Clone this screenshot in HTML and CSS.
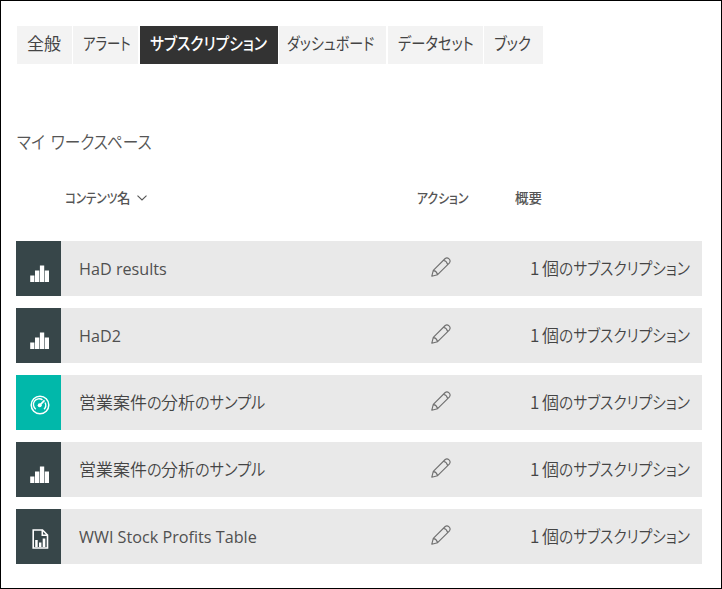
FILE: index.html
```html
<!DOCTYPE html>
<html lang="ja">
<head>
<meta charset="utf-8">
<title>サブスクリプション</title>
<link rel="stylesheet" href="styles.css">
</head>
<body>
<svg class="defs" aria-hidden="true">
  <symbol id="bars" viewBox="0 0 20 17"><path d="M.2 10.5h4.2V17H.2zM5 5.5h4.3V17H5zM9.9.5h4.3V17H9.9zM14.8 5.5H19V17h-4.2z" fill="#fff"/></symbol>
  <symbol id="gauge" viewBox="0 0 20 20"><g fill="none" stroke="#fff"><circle cx="10" cy="10" r="8.8" stroke-width="1.5"/><path d="M5.8 14.2A5.7 5.7 0 0 1 12.5 4.9M15 7.5a5.7 5.7 0 0 1-.9 6.7" stroke-width="1.4"/><path d="M10 10l4.5-4.7" stroke-width="1.8"/></g><circle cx="9.7" cy="10.3" r="2" fill="#fff"/></symbol>
  <symbol id="report" viewBox="0 0 17 20"><path d="M1.2 1h9.3l5 5v13H1.2zM10.3 1v5.2h5.2" fill="none" stroke="#fff" stroke-width="1.6"/><path d="M3.2 11h2.5v7H3.2zM7 13.5h2.4V18H7zM10.7 9.5h2.6V18h-2.6z" fill="#fff"/></symbol>
  <symbol id="pencil" viewBox="0 0 20 20"><path d="M.8 19.2l1.5-5.8L14.2 1.5q1.9-1.4 3.8.4t.5 3.9L6.6 17.7zM2.3 13.4q3.3.8 4.3 4.3M12.4 3.3q3.3.8 4.3 4.3" fill="none" stroke="#707070" stroke-width="1.15" stroke-linejoin="round"/></symbol>
</svg>
<main class="page">
  <nav class="tabs">
    <a class="tab general">全般</a>
    <a class="tab alerts"><span class="kana">アラート</span></a>
    <a class="tab subscriptions active"><span class="kana">サブスクリプション</span></a>
    <a class="tab dashboards"><span class="kana">ダッシュボード</span></a>
    <a class="tab datasets"><span class="kana">データセット</span></a>
    <a class="tab books"><span class="kana">ブック</span></a>
  </nav>
  <h1><span class="kana">マイ ワークスペース</span></h1>
  <div class="head">
    <div class="sort"><span class="kana content-name">コンテンツ</span>名<svg class="chevron" viewBox="0 0 10 6"><path d="M.5.6L5 5 9.5.6" fill="none" stroke="#555" stroke-width="1.1"/></svg></div>
    <div class="action"><span class="kana">アクション</span></div>
    <div>概要</div>
  </div>
  <section class="list">
    <article class="row"><div class="tile"><svg class="i-bars"><use href="#bars"/></svg></div><div class="name latin">HaD results</div><svg class="pencil"><use href="#pencil"/></svg><div class="summary"><span class="one">1</span>個<span class="kana">のサブスクリプション</span></div></article>
    <article class="row"><div class="tile"><svg class="i-bars"><use href="#bars"/></svg></div><div class="name latin">HaD2</div><svg class="pencil"><use href="#pencil"/></svg><div class="summary"><span class="one">1</span>個<span class="kana">のサブスクリプション</span></div></article>
    <article class="row"><div class="tile teal"><svg class="i-gauge"><use href="#gauge"/></svg></div><div class="name">営業案件<span class="kana no">の</span>分析<span class="kana">のサンプル</span></div><svg class="pencil"><use href="#pencil"/></svg><div class="summary"><span class="one">1</span>個<span class="kana">のサブスクリプション</span></div></article>
    <article class="row"><div class="tile"><svg class="i-bars"><use href="#bars"/></svg></div><div class="name">営業案件<span class="kana no">の</span>分析<span class="kana">のサンプル</span></div><svg class="pencil"><use href="#pencil"/></svg><div class="summary"><span class="one">1</span>個<span class="kana">のサブスクリプション</span></div></article>
    <article class="row"><div class="tile"><svg class="i-report"><use href="#report"/></svg></div><div class="name latin">WWI Stock Profits Table</div><svg class="pencil"><use href="#pencil"/></svg><div class="summary"><span class="one">1</span>個<span class="kana">のサブスクリプション</span></div></article>
  </section>
</main>
</body>
</html>
```
FILE: styles.css
```css
* { box-sizing: border-box; }
body { margin: 0; background: #fff; color: #444; font-family: "Noto Sans CJK JP", sans-serif; font-size: 17px; }
.defs { display: block; width: 0; height: 0; }
.page { --condense: .85; width: 722px; height: 589px; border: 1px solid #000; padding: 25px 19px 0 15px; overflow: hidden; }
.kana { display: inline-block; white-space: pre; transform: scaleX(var(--condense)); transform-origin: 0 50%; font-feature-settings: "palt"; }
.tabs { display: grid; grid-template-columns: 55px 65px 138px 107px 95px 59px; gap: 1.4px; height: 38px; margin-left: 1px; }
.tab { background: #f3f3f3; padding-left: 10px; line-height: 34px; white-space: nowrap; overflow: hidden; }
.tab.active { background: #333; color: #fff; font-weight: 500; }
.alerts { --condense: .79; }
.subscriptions { --condense: .87; }
.dashboards { --condense: .825; padding-left: 8px; }
.datasets { --condense: .84; }
h1 { --condense: .87; margin: 63px 0 0 1px; height: 28px; font-size: 18px; line-height: 28px; font-weight: 350; color: #555; word-spacing: 3px; }
.head { display: grid; grid-template-columns: 352px 98px 1fr; margin: 32px 0 0 49px; height: 22px; font-size: 13.5px; line-height: 20px; font-weight: 500; color: #555; }
.sort { display: flex; align-items: center; height: 20px; }
.action { --condense: .88; }
.content-name { width: 52px; }
.chevron { width: 10px; height: 6px; margin: 2px 0 0 6px; }
.list { display: grid; gap: 12px; margin-top: 32px; }
.row { display: grid; grid-template-columns: 45px 370px 98px minmax(0, 1fr); width: 686px; height: 55px; background: #e9e9e9; align-items: center; white-space: nowrap; font-weight: 350; color: #444; }
.tile { height: 55px; background: #374649; display: grid; justify-items: center; padding-top: 24px; }
.teal { background: #01b8aa; }
.i-bars { width: 20px; height: 17px; margin-left: 2px; }
.i-gauge { width: 20px; height: 20px; margin: -4px 0 0 2px; }
.i-report { width: 17px; height: 20px; margin: -4px 0 0 3px; }
.name { --condense: .895; padding-left: 18px; display: flex; line-height: 24px; padding-bottom: 2px; }
.latin { font-family: "Open Sans", sans-serif; font-size: 16.2px; font-weight: 400; color: #505050; padding-bottom: 0; }
.no { width: 14px; }
.pencil { width: 20px; height: 20px; margin: 0 0 3px; }
.summary { --condense: .868; display: flex; line-height: 24px; padding: 0 0 2px 1px; }
.summary > * { flex: none; }
.one { width: 12px; }
```
